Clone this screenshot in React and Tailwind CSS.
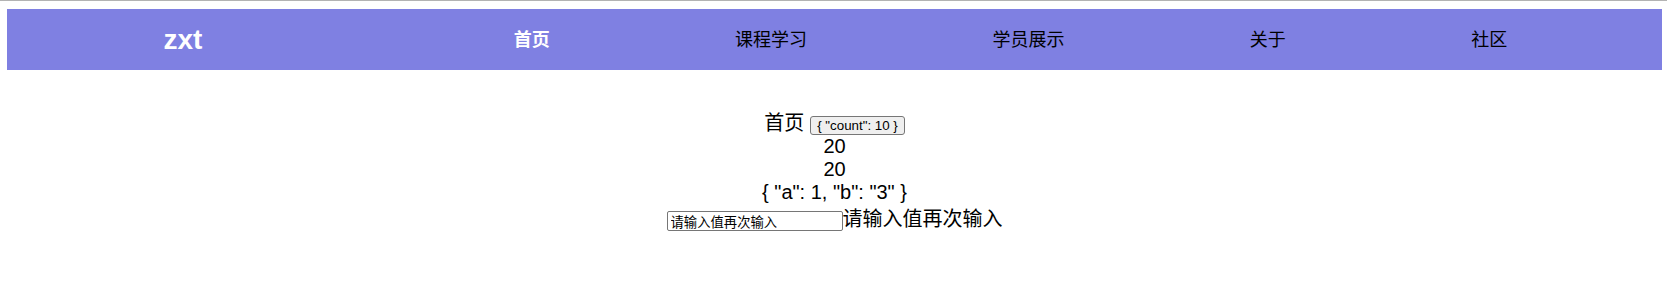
import React from 'react';

const navItems = ['首页', '课程学习', '学员展示', '关于', '社区'];

const Header = () => {
  return (
    <nav className="flex h-[61px] items-center bg-[#7f80e2]">
      <div className="w-[352px] text-center">
        <span className="pt-[4px] text-[28px] font-bold leading-[33px] text-white">zxt</span>
      </div>
      <ul className="flex flex-1 items-center justify-around px-[62px]">
        {navItems.map((item, i) => (
          <li
            key={item}
            className={
              i === 0
                ? 'text-[18px] font-bold leading-[26px] text-white'
                : 'text-[18px] leading-[26px] text-black'
            }
          >
            {item}
          </li>
        ))}
      </ul>
    </nav>
  );
};

const Home = () => {
  const [count] = React.useState(10);
  const [value, setValue] = React.useState('请输入值再次输入');
  const num = count * 2;

  return (
    <div className="mt-[38px] text-[20px] text-black">
      {/* line 1 */}
      <div className="flex h-[27px] items-end justify-center">
        <span className="leading-[23px]">首页</span>
        <button className="ml-[6px] rounded-[3px] border border-[#767676] bg-[#efefef] px-[6px] py-[1px] text-[13.33px] leading-[15px]">
          {`{ "count": ${count} }`}
        </button>
      </div>
      <div className="text-center leading-[23px]">{num}</div>
      <div className="text-center leading-[23px]">{num}</div>
      <div className="text-center leading-[23px]">{'{ "a": 1, "b": "3" }'}</div>
      {/* input line */}
      <div className="flex h-[27px] items-end justify-center">
        <input
          className="h-[20px] w-[176px] rounded-[2px] border border-[#767676] bg-white px-[3px] text-[13.33px] text-black outline-none"
          value={value}
          onChange={(e) => setValue(e.target.value)}
        />
        <span className="leading-[23px]">{value}</span>
      </div>
    </div>
  );
};

export default function App() {
  return (
    <div
      className="min-h-[306px] border-t border-[#b3b3b3] bg-white pl-[7px] pr-[5px] pt-[8px]"
      style={{ fontFamily: '"Liberation Sans", Arial, "Noto Sans CJK SC", sans-serif' }}
    >
      <Header />
      <Home />
    </div>
  );
}
